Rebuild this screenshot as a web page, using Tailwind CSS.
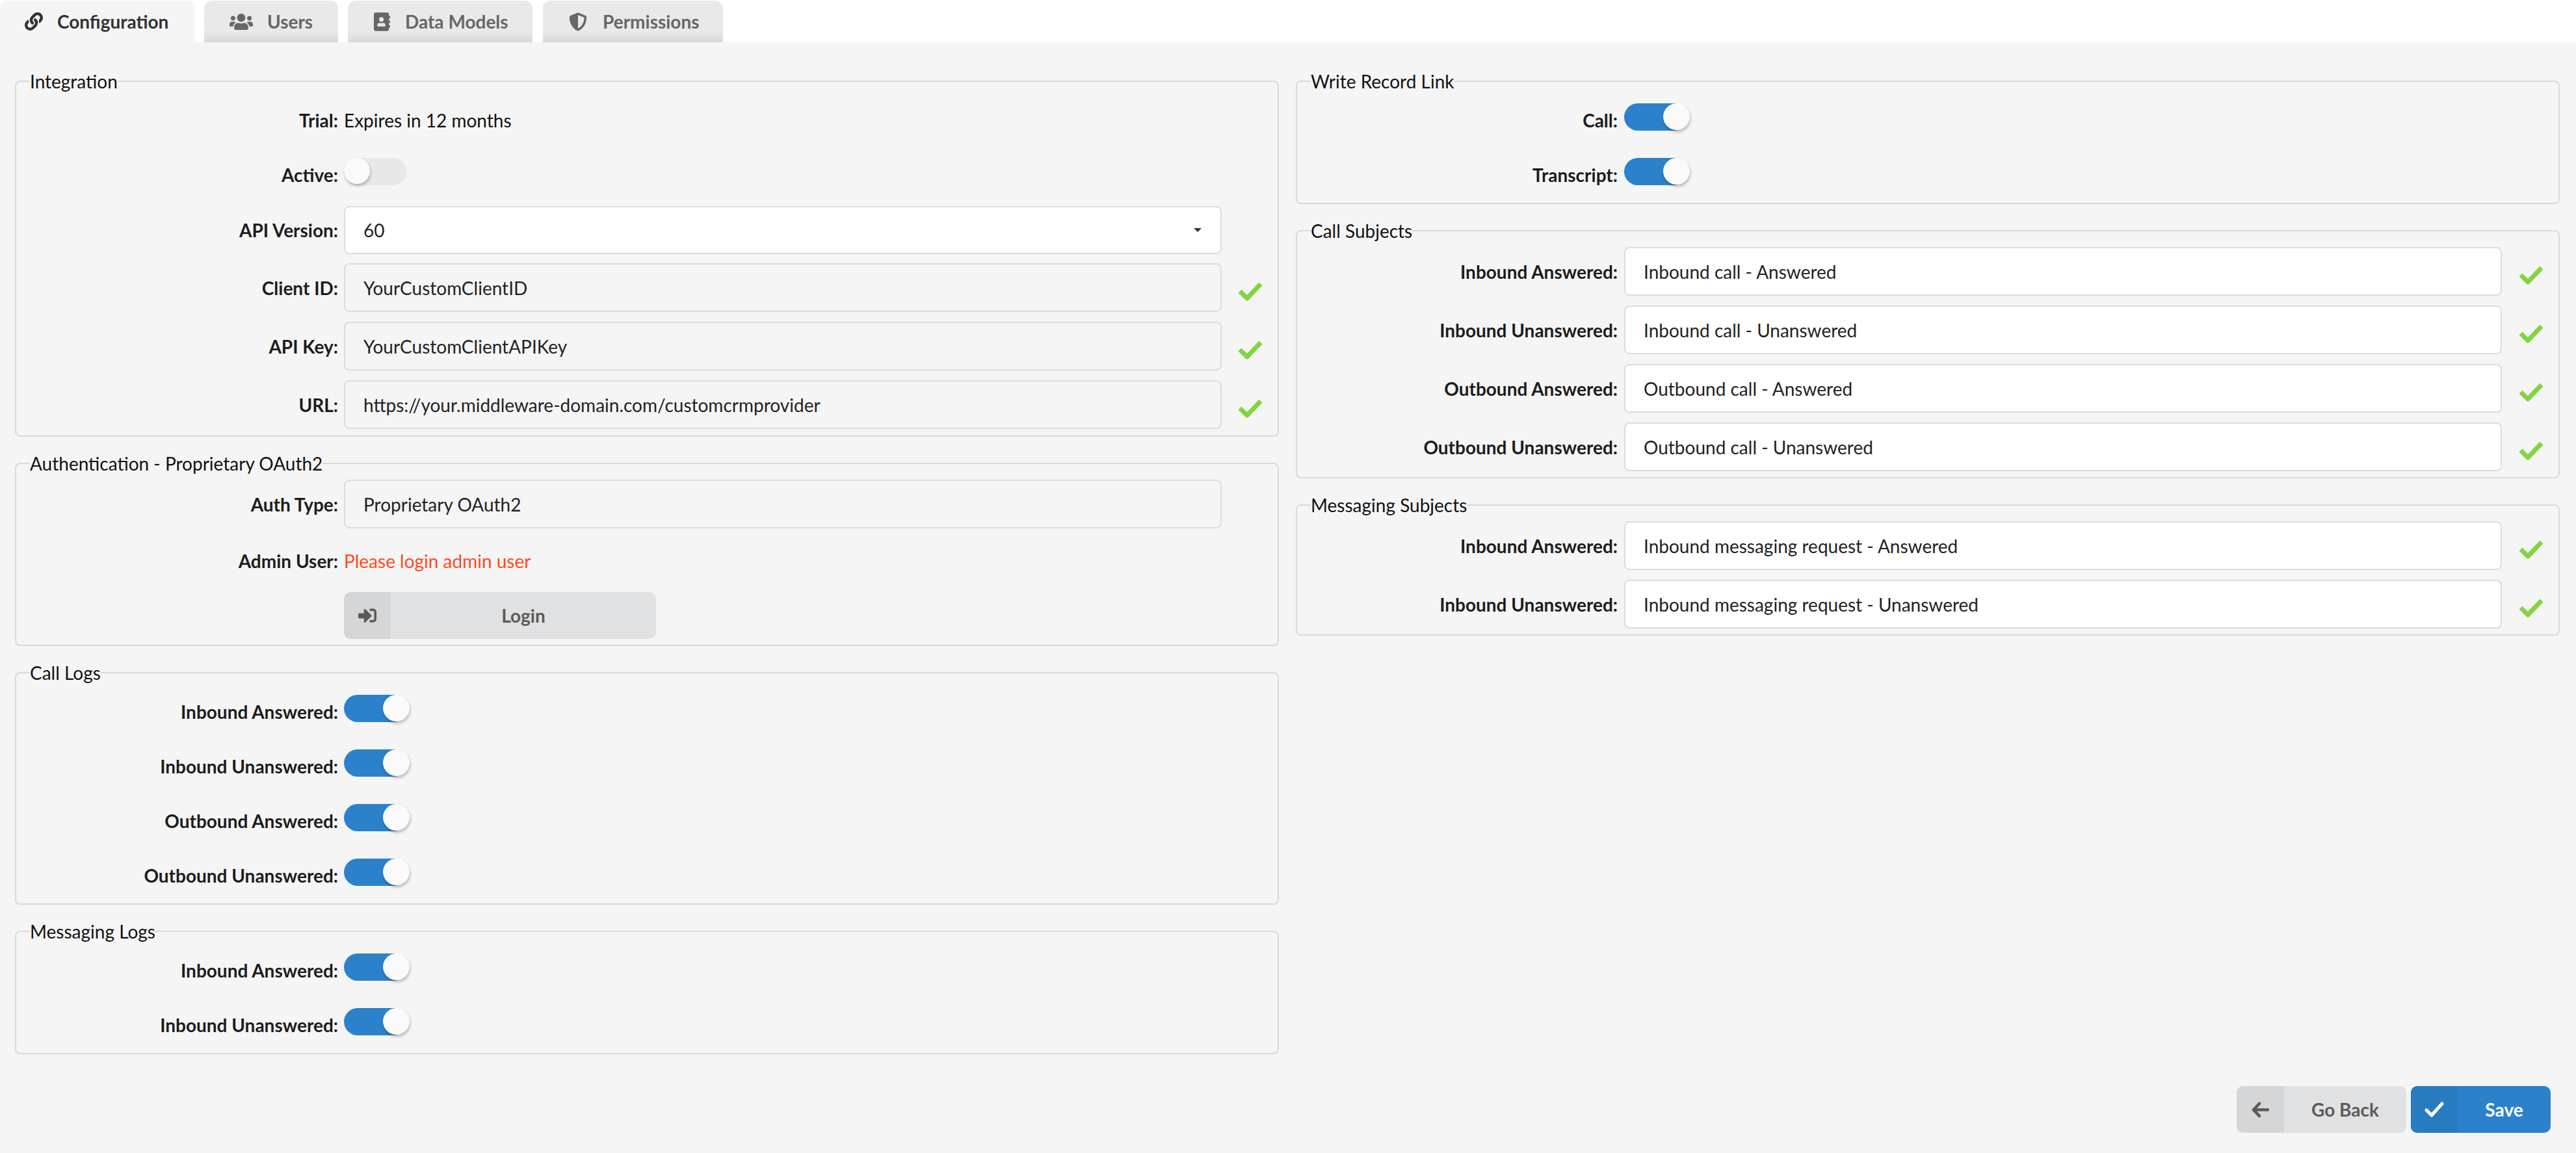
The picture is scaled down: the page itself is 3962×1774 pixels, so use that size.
<!DOCTYPE html>
<html>
<head>
<meta charset="utf-8">
<title>Configuration</title>
<script src="https://cdn.jsdelivr.net/npm/@tailwindcss/browser@4"></script>
</head>
<body class="bg-[#f5f5f5] font-[Lato,sans-serif] text-[28px] text-[#1c1c1c]">
<!-- Tabs -->
<div class="h-[65px] bg-white pt-px flex font-bold text-[#666]">
	<div class="w-[300px] mr-[14px] pl-[38px] flex items-center gap-[22px] bg-[#f5f5f5] rounded-t-[12px] text-[#333]">
		<svg class="w-[28px] h-[28px]" viewBox="0 0 512 512" fill="currentColor"><path d="M326.612 185.391c59.747 59.809 58.927 155.698.36 214.59-.11.12-.24.25-.36.37l-67.2 67.2c-59.27 59.27-155.699 59.262-214.96 0-59.27-59.26-59.27-155.7 0-214.96l37.106-37.106c9.84-9.84 26.786-3.3 27.294 10.606.648 17.722 3.826 35.527 9.69 52.721 1.986 5.822.567 12.262-3.783 16.612l-13.087 13.087c-28.026 28.026-28.905 73.66-1.155 101.96 28.024 28.579 74.086 28.749 102.325.51l67.2-67.19c28.191-28.191 28.073-73.757 0-101.83-3.701-3.694-7.429-6.564-10.341-8.569a16.037 16.037 0 0 1-6.947-12.606c-.396-10.567 3.348-21.456 11.698-29.806l21.054-21.055c5.521-5.521 14.182-6.199 20.584-1.731a152.482 152.482 0 0 1 20.522 17.197zM467.547 44.449c-59.261-59.262-155.69-59.27-214.96 0l-67.2 67.2c-.12.12-.25.25-.36.37-58.566 58.892-59.387 154.781.36 214.59a152.454 152.454 0 0 0 20.521 17.196c6.402 4.468 15.064 3.789 20.584-1.731l21.054-21.055c8.35-8.35 12.094-19.239 11.698-29.806a16.037 16.037 0 0 0-6.947-12.606c-2.912-2.005-6.64-4.875-10.341-8.569-28.073-28.073-28.191-73.639 0-101.83l67.2-67.19c28.239-28.239 74.3-28.069 102.325.51 27.75 28.3 26.872 73.934-1.155 101.96l-13.087 13.087c-4.35 4.35-5.769 10.79-3.783 16.612 5.864 17.194 9.042 34.999 9.69 52.721.509 13.906 17.454 20.446 27.294 10.606l37.106-37.106c59.271-59.259 59.271-155.699.001-214.959z"/></svg>
		<span>Configuration</span>
	</div>
	<div class="w-[206px] mr-[15px] pl-[39px] flex items-center gap-[22px] rounded-t-[12px] bg-linear-to-b from-[#e9e9e9] from-75% to-[#d8d8d8]">
		<svg class="w-[36px] h-[29px]" viewBox="0 0 640 512" fill="currentColor"><path d="M96 224c35.3 0 64-28.7 64-64s-28.7-64-64-64-64 28.7-64 64 28.7 64 64 64zm448 0c35.3 0 64-28.7 64-64s-28.7-64-64-64-64 28.7-64 64 28.7 64 64 64zm32 32h-64c-17.6 0-33.5 7.1-45.1 18.6 40.3 22.1 68.9 62 75.1 109.4h66c17.7 0 32-14.3 32-32v-32c0-35.3-28.7-64-64-64zm-256 0c61.9 0 112-50.1 112-112S381.9 32 320 32 208 82.1 208 144s50.1 112 112 112zm76.8 32h-8.3c-20.8 10-43.9 16-68.5 16s-47.6-6-68.5-16h-8.3C179.6 288 128 339.6 128 403.2V432c0 26.5 21.5 48 48 48h288c26.5 0 48-21.5 48-48v-28.8c0-63.6-51.6-115.2-115.2-115.2zm-223.7-13.4C161.5 263.1 145.6 256 128 256H64c-35.3 0-64 28.7-64 64v32c0 17.7 14.3 32 32 32h65.9c6.3-47.4 34.9-87.3 75.2-109.4z"/></svg>
		<span>Users</span>
	</div>
	<div class="w-[284px] mr-[16px] pl-[40px] flex items-center gap-[23px] rounded-t-[12px] bg-linear-to-b from-[#e9e9e9] from-75% to-[#d8d8d8]">
		<svg class="w-[25px] h-[29px]" viewBox="0 0 448 512" fill="currentColor"><path d="M436 160c6.6 0 12-5.4 12-12v-40c0-6.6-5.4-12-12-12h-20V48c0-26.5-21.5-48-48-48H48C21.5 0 0 21.5 0 48v416c0 26.5 21.5 48 48 48h320c26.5 0 48-21.5 48-48v-48h20c6.6 0 12-5.4 12-12v-40c0-6.6-5.4-12-12-12h-20v-64h20c6.6 0 12-5.4 12-12v-40c0-6.6-5.4-12-12-12h-20v-64h20zm-228-32c35.3 0 64 28.7 64 64s-28.7 64-64 64-64-28.7-64-64 28.7-64 64-64zm112 236.8c0 10.6-10 19.2-22.4 19.2H118.4C106 384 96 375.4 96 364.8v-19.2c0-31.8 30.1-57.6 67.2-57.6h5c12.3 5.1 25.7 8 39.8 8s27.6-2.9 39.8-8h5c37.1 0 67.2 25.8 67.2 57.6v19.2z"/></svg>
		<span>Data Models</span>
	</div>
	<div class="w-[277px] pl-[40px] flex items-center gap-[24px] rounded-t-[12px] bg-linear-to-b from-[#e9e9e9] from-75% to-[#d8d8d8]">
		<svg class="w-[28px] h-[29px]" viewBox="0 0 512 512" fill="currentColor"><path d="M466.5 83.7l-192-80a48.15 48.15 0 0 0-36.9 0l-192 80C27.7 91.1 16 108.6 16 128c0 198.5 114.5 335.7 221.5 380.3 11.8 4.9 25.1 4.9 36.9 0C360.1 472.6 496 349.3 496 128c0-19.4-11.7-36.9-29.5-44.3zM256.1 446.3l-.1-381 175.9 73.3c-3.3 151.4-82.1 261.1-175.8 307.7z"/></svg>
		<span>Permissions</span>
	</div>
</div>

<div class="pl-[23px] pr-[25px] pt-[42px] grid grid-cols-2 gap-x-[26px] items-start">
	<!-- Left column -->
	<div class="flex flex-col gap-[23px]">
		<fieldset class="border-2 border-[#d9d9d9] rounded-[8px] pb-[10px]">
			<legend class="ml-[21px] h-[36px] leading-[36px] text-[#111]">Integration</legend>
			<div class="flex items-center h-[36px] mt-[24px]">
				<div class="w-[495px] text-right font-bold">Trial:</div>
				<div class="ml-[9px] text-[#111]">Expires in 12 months</div>
			</div>
			<div class="flex mt-[40px]">
				<div class="w-[495px] h-[42px] pt-[11px] leading-[31px] text-right font-bold">Active:</div>
				<div class="ml-[9px] w-[97px] h-[42px] rounded-full bg-[#e8e8e8] flex">
					<div class="w-[40px] h-[40px] rounded-full bg-[#fafafa] shadow-[1px_3px_4px_rgba(0,0,0,0.25)]"></div>
				</div>
			</div>
			<div class="flex items-center mt-[32px]">
				<div class="w-[495px] text-right font-bold">API Version:</div>
				<div class="ml-[9px] flex-1 h-[74px] border-2 border-[#dcdcdc] rounded-[8px] bg-white pl-[28px] pr-[29px] flex items-center justify-between text-[#222]">
					<span>60</span>
					<div class="border-x-[6px] border-x-transparent border-t-[6px] border-t-[#333]"></div>
				</div>
				<div class="w-[86px]"></div>
			</div>
			<div class="flex items-center mt-[14px]">
				<div class="w-[495px] text-right font-bold">Client ID:</div>
				<div class="ml-[9px] flex-1 h-[75px] border-2 border-[#dcdcdc] rounded-[8px] pl-[28px] flex items-center text-[#222]">YourCustomClientID</div>
				<div class="w-[86px] pl-[25px] pt-[12px]"><svg class="w-[38px] h-[29px]" viewBox="0 0 38 29" fill="none" stroke="#84d440" stroke-width="7" stroke-linejoin="round"><polyline points="3,14 14,25 35,3"/></svg></div>
			</div>
			<div class="flex items-center mt-[15px]">
				<div class="w-[495px] text-right font-bold">API Key:</div>
				<div class="ml-[9px] flex-1 h-[75px] border-2 border-[#dcdcdc] rounded-[8px] pl-[28px] flex items-center text-[#222]">YourCustomClientAPIKey</div>
				<div class="w-[86px] pl-[25px] pt-[12px]"><svg class="w-[38px] h-[29px]" viewBox="0 0 38 29" fill="none" stroke="#84d440" stroke-width="7" stroke-linejoin="round"><polyline points="3,14 14,25 35,3"/></svg></div>
			</div>
			<div class="flex items-center mt-[15px]">
				<div class="w-[495px] text-right font-bold">URL:</div>
				<div class="ml-[9px] flex-1 h-[75px] border-2 border-[#dcdcdc] rounded-[8px] pl-[28px] flex items-center text-[#222]">https://your.middleware-domain.com/customcrmprovider</div>
				<div class="w-[86px] pl-[25px] pt-[12px]"><svg class="w-[38px] h-[29px]" viewBox="0 0 38 29" fill="none" stroke="#84d440" stroke-width="7" stroke-linejoin="round"><polyline points="3,14 14,25 35,3"/></svg></div>
			</div>
		</fieldset>

		<fieldset class="border-2 border-[#d9d9d9] rounded-[8px] pb-[9px]">
			<legend class="ml-[21px] h-[36px] leading-[36px] text-[#111]">Authentication - Proprietary OAuth2</legend>
			<div class="flex items-center mt-[7px]">
				<div class="w-[495px] text-right font-bold">Auth Type:</div>
				<div class="ml-[9px] flex-1 h-[75px] border-2 border-[#dcdcdc] rounded-[8px] pl-[28px] flex items-center text-[#222]">Proprietary OAuth2</div>
				<div class="w-[86px]"></div>
			</div>
			<div class="flex items-center h-[36px] mt-[32px]">
				<div class="w-[495px] text-right font-bold">Admin User:</div>
				<div class="ml-[9px] text-[#ff4a1c]">Please login admin user</div>
			</div>
			<div class="ml-[504px] mt-[30px] w-[480px] h-[72px] rounded-[10px] overflow-hidden flex bg-[#e0e1e3] font-bold text-[#5a5a5a]">
				<div class="w-[72px] bg-[#d5d6d8] flex items-center justify-center">
					<svg class="w-[28px] h-[28px]" viewBox="0 0 512 512" fill="currentColor"><path d="M416 448h-84c-6.6 0-12-5.4-12-12v-40c0-6.6 5.4-12 12-12h84c17.7 0 32-14.3 32-32V160c0-17.7-14.3-32-32-32h-84c-6.6 0-12-5.4-12-12V76c0-6.6 5.4-12 12-12h84c53 0 96 43 96 96v192c0 53-43 96-96 96zm-47-201L201 79c-15-15-41-4.5-41 17v96H24c-13.3 0-24 10.7-24 24v96c0 13.3 10.7 24 24 24h136v96c0 21.5 26 32 41 17l168-168c9.3-9.4 9.3-24.6 0-34z"/></svg>
				</div>
				<div class="flex-1 flex items-center justify-center">Login</div>
			</div>
		</fieldset>

		<fieldset class="border-2 border-[#d9d9d9] rounded-[8px] pb-[27px]">
			<legend class="ml-[21px] h-[36px] leading-[36px] text-[#111]">Call Logs</legend>
			<div class="flex mt-[16px]">
				<div class="w-[495px] h-[42px] pt-[11px] leading-[31px] text-right font-bold">Inbound Answered:</div>
				<div class="ml-[9px] w-[97px] h-[42px] rounded-full bg-[#2b82cb] flex justify-end"><div class="-mr-[4px] w-[41px] h-[41px] rounded-full bg-[#fafafa] shadow-[1px_3px_4px_rgba(0,0,0,0.25)]"></div></div>
			</div>
			<div class="flex mt-[42px]">
				<div class="w-[495px] h-[42px] pt-[11px] leading-[31px] text-right font-bold">Inbound Unanswered:</div>
				<div class="ml-[9px] w-[97px] h-[42px] rounded-full bg-[#2b82cb] flex justify-end"><div class="-mr-[4px] w-[41px] h-[41px] rounded-full bg-[#fafafa] shadow-[1px_3px_4px_rgba(0,0,0,0.25)]"></div></div>
			</div>
			<div class="flex mt-[42px]">
				<div class="w-[495px] h-[42px] pt-[11px] leading-[31px] text-right font-bold">Outbound Answered:</div>
				<div class="ml-[9px] w-[97px] h-[42px] rounded-full bg-[#2b82cb] flex justify-end"><div class="-mr-[4px] w-[41px] h-[41px] rounded-full bg-[#fafafa] shadow-[1px_3px_4px_rgba(0,0,0,0.25)]"></div></div>
			</div>
			<div class="flex mt-[42px]">
				<div class="w-[495px] h-[42px] pt-[11px] leading-[31px] text-right font-bold">Outbound Unanswered:</div>
				<div class="ml-[9px] w-[97px] h-[42px] rounded-full bg-[#2b82cb] flex justify-end"><div class="-mr-[4px] w-[41px] h-[41px] rounded-full bg-[#fafafa] shadow-[1px_3px_4px_rgba(0,0,0,0.25)]"></div></div>
			</div>
		</fieldset>

		<fieldset class="border-2 border-[#d9d9d9] rounded-[8px] pb-[27px]">
			<legend class="ml-[21px] h-[36px] leading-[36px] text-[#111]">Messaging Logs</legend>
			<div class="flex mt-[16px]">
				<div class="w-[495px] h-[42px] pt-[11px] leading-[31px] text-right font-bold">Inbound Answered:</div>
				<div class="ml-[9px] w-[97px] h-[42px] rounded-full bg-[#2b82cb] flex justify-end"><div class="-mr-[4px] w-[41px] h-[41px] rounded-full bg-[#fafafa] shadow-[1px_3px_4px_rgba(0,0,0,0.25)]"></div></div>
			</div>
			<div class="flex mt-[42px]">
				<div class="w-[495px] h-[42px] pt-[11px] leading-[31px] text-right font-bold">Inbound Unanswered:</div>
				<div class="ml-[9px] w-[97px] h-[42px] rounded-full bg-[#2b82cb] flex justify-end"><div class="-mr-[4px] w-[41px] h-[41px] rounded-full bg-[#fafafa] shadow-[1px_3px_4px_rgba(0,0,0,0.25)]"></div></div>
			</div>
		</fieldset>
	</div>

	<!-- Right column -->
	<div class="flex flex-col gap-[23px]">
		<fieldset class="border-2 border-[#d9d9d9] rounded-[8px] pb-[27px]">
			<legend class="ml-[21px] h-[36px] leading-[36px] text-[#111]">Write Record Link</legend>
			<div class="flex mt-[16px]">
				<div class="w-[493px] h-[42px] pt-[11px] leading-[31px] text-right font-bold">Call:</div>
				<div class="ml-[10px] w-[97px] h-[42px] rounded-full bg-[#2b82cb] flex justify-end"><div class="-mr-[4px] w-[41px] h-[41px] rounded-full bg-[#fafafa] shadow-[1px_3px_4px_rgba(0,0,0,0.25)]"></div></div>
			</div>
			<div class="flex mt-[42px]">
				<div class="w-[493px] h-[42px] pt-[11px] leading-[31px] text-right font-bold">Transcript:</div>
				<div class="ml-[10px] w-[97px] h-[42px] rounded-full bg-[#2b82cb] flex justify-end"><div class="-mr-[4px] w-[41px] h-[41px] rounded-full bg-[#fafafa] shadow-[1px_3px_4px_rgba(0,0,0,0.25)]"></div></div>
			</div>
		</fieldset>

		<fieldset class="border-2 border-[#d9d9d9] rounded-[8px] pb-[9px] flex flex-col">
			<legend class="ml-[21px] h-[36px] leading-[36px] text-[#111]">Call Subjects</legend>
			<div class="flex items-center mt-[7px]">
				<div class="w-[493px] text-right font-bold">Inbound Answered:</div>
				<div class="ml-[10px] flex-1 h-[75px] border-2 border-[#dcdcdc] rounded-[8px] bg-white pl-[28px] flex items-center text-[#222]">Inbound call - Answered</div>
				<div class="w-[87px] pl-[26px] pt-[12px]"><svg class="w-[38px] h-[29px]" viewBox="0 0 38 29" fill="none" stroke="#84d440" stroke-width="7" stroke-linejoin="round"><polyline points="3,14 14,25 35,3"/></svg></div>
			</div>
			<div class="flex items-center mt-[15px]">
				<div class="w-[493px] text-right font-bold">Inbound Unanswered:</div>
				<div class="ml-[10px] flex-1 h-[75px] border-2 border-[#dcdcdc] rounded-[8px] bg-white pl-[28px] flex items-center text-[#222]">Inbound call - Unanswered</div>
				<div class="w-[87px] pl-[26px] pt-[12px]"><svg class="w-[38px] h-[29px]" viewBox="0 0 38 29" fill="none" stroke="#84d440" stroke-width="7" stroke-linejoin="round"><polyline points="3,14 14,25 35,3"/></svg></div>
			</div>
			<div class="flex items-center mt-[15px]">
				<div class="w-[493px] text-right font-bold">Outbound Answered:</div>
				<div class="ml-[10px] flex-1 h-[75px] border-2 border-[#dcdcdc] rounded-[8px] bg-white pl-[28px] flex items-center text-[#222]">Outbound call - Answered</div>
				<div class="w-[87px] pl-[26px] pt-[12px]"><svg class="w-[38px] h-[29px]" viewBox="0 0 38 29" fill="none" stroke="#84d440" stroke-width="7" stroke-linejoin="round"><polyline points="3,14 14,25 35,3"/></svg></div>
			</div>
			<div class="flex items-center mt-[15px]">
				<div class="w-[493px] text-right font-bold">Outbound Unanswered:</div>
				<div class="ml-[10px] flex-1 h-[75px] border-2 border-[#dcdcdc] rounded-[8px] bg-white pl-[28px] flex items-center text-[#222]">Outbound call - Unanswered</div>
				<div class="w-[87px] pl-[26px] pt-[12px]"><svg class="w-[38px] h-[29px]" viewBox="0 0 38 29" fill="none" stroke="#84d440" stroke-width="7" stroke-linejoin="round"><polyline points="3,14 14,25 35,3"/></svg></div>
			</div>
		</fieldset>

		<fieldset class="border-2 border-[#d9d9d9] rounded-[8px] pb-[9px]">
			<legend class="ml-[21px] h-[36px] leading-[36px] text-[#111]">Messaging Subjects</legend>
			<div class="flex items-center mt-[7px]">
				<div class="w-[493px] text-right font-bold">Inbound Answered:</div>
				<div class="ml-[10px] flex-1 h-[75px] border-2 border-[#dcdcdc] rounded-[8px] bg-white pl-[28px] flex items-center text-[#222]">Inbound messaging request - Answered</div>
				<div class="w-[87px] pl-[26px] pt-[12px]"><svg class="w-[38px] h-[29px]" viewBox="0 0 38 29" fill="none" stroke="#84d440" stroke-width="7" stroke-linejoin="round"><polyline points="3,14 14,25 35,3"/></svg></div>
			</div>
			<div class="flex items-center mt-[15px]">
				<div class="w-[493px] text-right font-bold">Inbound Unanswered:</div>
				<div class="ml-[10px] flex-1 h-[75px] border-2 border-[#dcdcdc] rounded-[8px] bg-white pl-[28px] flex items-center text-[#222]">Inbound messaging request - Unanswered</div>
				<div class="w-[87px] pl-[26px] pt-[12px]"><svg class="w-[38px] h-[29px]" viewBox="0 0 38 29" fill="none" stroke="#84d440" stroke-width="7" stroke-linejoin="round"><polyline points="3,14 14,25 35,3"/></svg></div>
			</div>
		</fieldset>
	</div>
</div>

<!-- Footer buttons -->
<div class="flex justify-end gap-[7px] pr-[39px] mt-[49px] pb-[31px] font-bold">
	<div class="w-[261px] h-[72px] rounded-[10px] overflow-hidden flex bg-[#e0e1e3] text-[#5a5a5a]">
		<div class="w-[73px] bg-[#d5d6d8] flex items-center justify-center">
			<svg class="w-[27px] h-[25px]" viewBox="0 0 27 25" fill="none" stroke="currentColor" stroke-width="4.5" stroke-linecap="round" stroke-linejoin="round"><polyline points="12,3 3,12.5 12,22"/><line x1="3" y1="12.5" x2="25" y2="12.5"/></svg>
		</div>
		<div class="flex-1 flex items-center justify-center">Go Back</div>
	</div>
	<div class="w-[215px] h-[72px] rounded-[10px] overflow-hidden flex bg-[#2b82cb] text-white">
		<div class="w-[72px] bg-[#277cc0] flex items-center justify-center">
			<svg class="w-[30px] h-[24px]" viewBox="0 0 30 24" fill="none" stroke="currentColor" stroke-width="5" stroke-linecap="round" stroke-linejoin="round"><polyline points="3,13 11,21 27,3"/></svg>
		</div>
		<div class="flex-1 flex items-center justify-center">Save</div>
	</div>
</div>
</body>
</html>
